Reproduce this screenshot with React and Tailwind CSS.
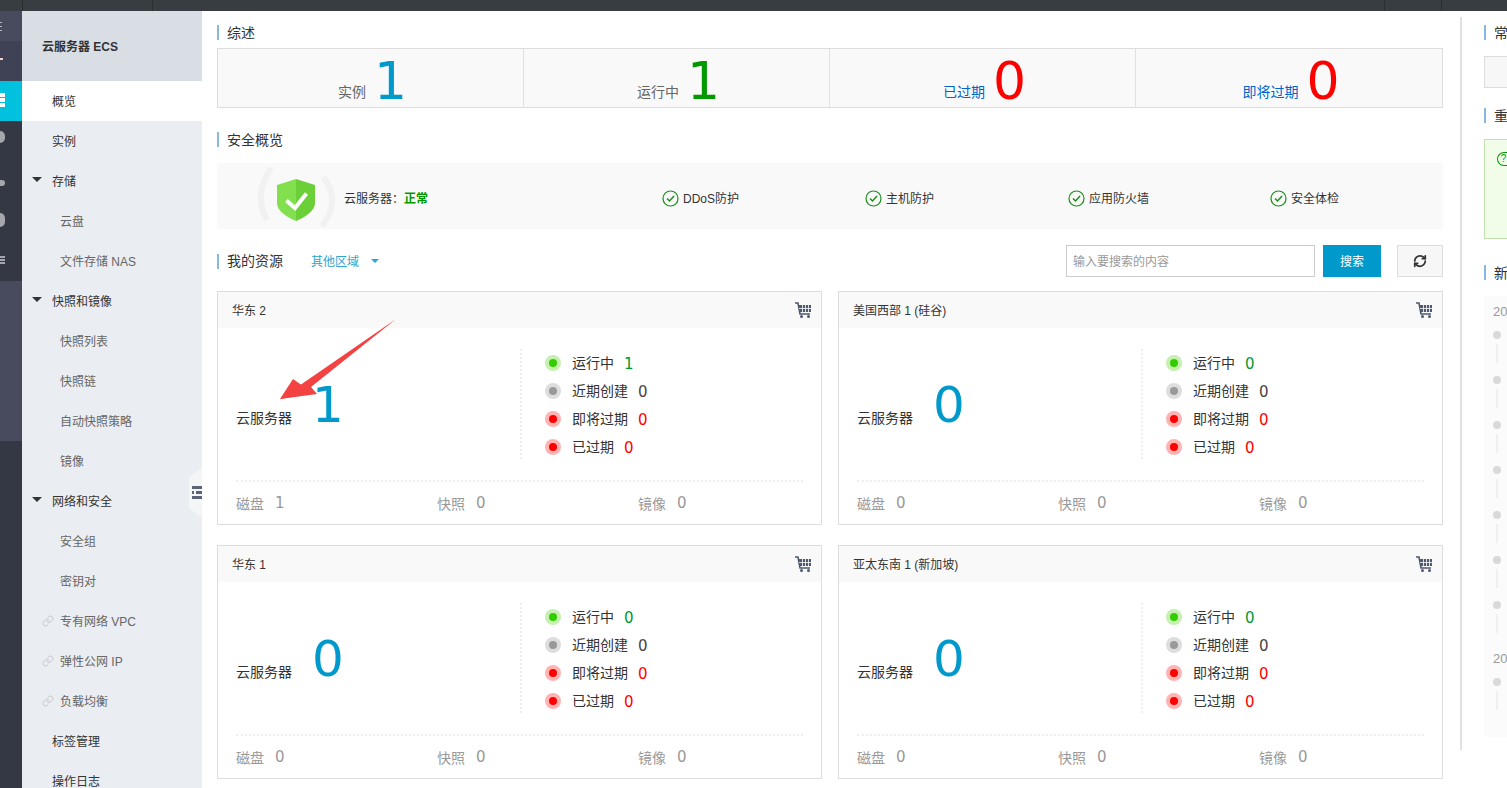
import React from 'react';
import { RefreshCw, Link as LinkIcon } from 'lucide-react';

const navItems = [
    { label: '概览', indent: 'pl-[30px]', active: true, dark: true },
    { label: '实例', indent: 'pl-[30px]', dark: true },
    { label: '存储', indent: 'pl-[30px]', group: true, dark: true },
    { label: '云盘', indent: 'pl-[38px]' },
    { label: '文件存储 NAS', indent: 'pl-[38px]' },
    { label: '快照和镜像', indent: 'pl-[30px]', group: true, dark: true },
    { label: '快照列表', indent: 'pl-[38px]' },
    { label: '快照链', indent: 'pl-[38px]' },
    { label: '自动快照策略', indent: 'pl-[38px]' },
    { label: '镜像', indent: 'pl-[38px]' },
    { label: '网络和安全', indent: 'pl-[30px]', group: true, dark: true },
    { label: '安全组', indent: 'pl-[38px]' },
    { label: '密钥对', indent: 'pl-[38px]' },
    { label: '专有网络 VPC', indent: 'pl-[38px]', link: true },
    { label: '弹性公网 IP', indent: 'pl-[38px]', link: true },
    { label: '负载均衡', indent: 'pl-[38px]', link: true },
    { label: '标签管理', indent: 'pl-[30px]', dark: true },
    { label: '操作日志', indent: 'pl-[30px]', dark: true },
];

const stats = [
    { label: '实例', value: 1, labelColor: 'text-[#666]', valueColor: 'text-[#0099cc]' },
    { label: '运行中', value: 1, labelColor: 'text-[#666]', valueColor: 'text-[#009900]' },
    { label: '已过期', value: 0, labelColor: 'text-[#0066cc]', valueColor: 'text-[#ff0000]' },
    { label: '即将过期', value: 0, labelColor: 'text-[#0066cc]', valueColor: 'text-[#ff0000]' },
];

const regions = [
    { name: '华东 2', count: 1, running: 1, disk: 1 },
    { name: '美国西部 1 (硅谷)', count: 0, running: 0, disk: 0 },
    { name: '华东 1', count: 0, running: 0, disk: 0 },
    { name: '亚太东南 1 (新加坡)', count: 0, running: 0, disk: 0 },
];

const digitFont = "font-['DejaVu_Sans',sans-serif]";

const RailIcon = ({ children, className = '' }) => (
    <div className={`h-10 flex items-center justify-start overflow-hidden ${className}`}>{children}</div>
);

// the icon rail is scrolled off to the left, only the right slice of each icon shows
const Rail = () => (
    <div className="w-[22px] shrink-0 flex flex-col bg-[#333844]">
        <div className="h-[30px] bg-[#474b5d] flex items-center overflow-hidden">
            <div className="w-[2px] h-[9px] border-y border-[#b5b7c0] flex items-center"><div className="w-full h-px bg-[#b5b7c0]" /></div>
        </div>
        <RailIcon className="bg-[#3f4255]">
            <div className="w-[3px] h-[2px] bg-[#f0d0d0] mt-[-4px]" />
        </RailIcon>
        <RailIcon className="bg-[#00c1de]">
            <div className="w-[5px] flex flex-col gap-px mt-[-2px]">
                <div className="h-1 bg-white" />
                <div className="h-1 bg-white" />
                <div className="h-1 bg-white" />
            </div>
        </RailIcon>
        <RailIcon>
            <div className="w-[5px] h-[12px] rounded-r-full bg-[#a5a7ad] mt-[-8px]" />
        </RailIcon>
        <RailIcon>
            <div className="w-[5px] h-[6px] rounded-r-full bg-[#a5a7ad] mt-[4px]" />
        </RailIcon>
        <RailIcon>
            <div className="w-[5px] h-[14px] rounded-r-full bg-[#a5a7ad] mt-[-2px]" />
        </RailIcon>
        <RailIcon>
            <div className="w-[5px] flex flex-col gap-px mt-[-2px]">
                <div className="h-[2px] bg-[#a5a7ad]" />
                <div className="h-[2px] bg-[#a5a7ad]" />
                <div className="h-[2px] bg-[#a5a7ad]" />
            </div>
        </RailIcon>
        <div className="h-40 bg-[#474b5d]" />
        <div className="flex-1" />
    </div>
);

const Sidebar = () => (
    <div className="w-[180px] shrink-0 bg-[#eaedf1] relative">
        <div className="h-[70px] bg-[#d9dee4] flex items-center pl-5 pt-[2px] text-xs font-bold text-[#333]">云服务器 ECS</div>
        {navItems.map((item) => (
            <div
                key={item.label}
                className={`h-10 flex items-center relative pt-[2px] text-xs ${item.indent} ${item.active ? 'bg-white' : ''} ${item.dark ? 'text-[#333]' : 'text-[#666]'}`}
            >
                {item.group && <div className="absolute left-[10px] top-[16px] w-0 h-0 border-x-[5px] border-x-transparent border-t-[5px] border-t-[#333]" />}
                {item.link && <LinkIcon className="absolute left-[20px] top-[14px] w-[12px] h-[12px] text-[#c4c6cc]" strokeWidth={2} />}
                {item.label}
            </div>
        ))}
        <div className="absolute left-[167px] top-[457px] w-[13px] h-[50px] bg-[#f4f5f7] flex items-center justify-end [clip-path:polygon(100%_0,100%_100%,0_80%,0_18%)]">
            <div className="w-[10px] flex flex-col gap-[2px] mt-[-1px]">
                <div className="h-[3px] bg-[#5b6478]" />
                <div className="h-[3px] flex gap-[2px]">
                    <div className="w-[2px] bg-[#5b6478]" />
                    <div className="flex-1 bg-[#5b6478]" />
                </div>
                <div className="h-[3px] bg-[#5b6478]" />
            </div>
        </div>
    </div>
);

const SectionTitle = ({ children, className = '' }) => (
    <div className={`border-l-2 border-[#88b7e0] pl-2 h-[15px] flex items-center text-sm leading-none text-[#333] whitespace-nowrap ${className}`}>{children}</div>
);

const StatCell = ({ stat, last }) => (
    <div className={`h-full flex items-end justify-center gap-2 pl-1 ${last ? 'flex-1' : 'w-[306px] border-r border-[#e1e1e1]'}`}>
        <span className={`text-sm leading-none mb-[8px] ${stat.labelColor}`}>{stat.label}</span>
        <span className={`text-[52px] leading-none ${digitFont} ${stat.valueColor}`}>{stat.value}</span>
    </div>
);

const Shield = () => (
    <svg width="80" height="66" viewBox="0 0 80 66" fill="none">
        <path d="M14 5 Q-4 32 10 57" stroke="#f1f1f1" strokeWidth="6" />
        <path d="M66 14 Q85 37 65 63" stroke="#f1f1f1" strokeWidth="6" />
        <path d="M39 16 L20 22 V40 C20 48 30 54 39 58 Z" fill="#82e04f" />
        <path d="M39 16 L58 22 V40 C58 48 48 54 39 58 Z" fill="#6bd038" />
        <path d="M29.5 37.5 L38 45 L49.5 30.5" stroke="#fff" strokeWidth="4" />
    </svg>
);

const CheckItem = ({ label, className }) => (
    <div className={`flex items-center gap-1 text-xs text-[#333] absolute top-0 h-full pt-[4px] ${className}`}>
        <svg width="17" height="17" viewBox="0 0 17 17" fill="none">
            <circle cx="8.5" cy="8.5" r="7.5" stroke="#1a8f1a" strokeWidth="1.2" />
            <path d="M5 8.5 L7.5 11 L12 6" stroke="#1a8f1a" strokeWidth="1.5" />
        </svg>
        <span className="pt-[2px]">{label}</span>
    </div>
);

const Cart = () => (
    <svg className="-mt-[1px]" width="16" height="16" viewBox="0 0 16 16">
        <path d="M0 1 H3 L5 12 H15" fill="none" stroke="#4d5a70" strokeWidth="1.6" />
        <path d="M3.6 3 H16 V10 H4.6 Z" fill="#4d5a70" />
        <path d="M7.5 3 V10 M10.5 3 V10 M13.5 3 V10 M4 6.5 H16" stroke="#fff" strokeWidth="0.8" />
        <circle cx="6.5" cy="14.5" r="1.5" fill="#4d5a70" />
        <circle cx="13.5" cy="14.5" r="1.5" fill="#4d5a70" />
    </svg>
);

const StatusRow = ({ dot, halo, label, value, valueColor }) => (
    <div className="h-7 flex items-center text-sm text-[#333]">
        <div className={`w-4 h-4 rounded-full flex items-center justify-center mr-[11px] ${halo}`}>
            <div className={`w-2 h-2 rounded-full ${dot}`} />
        </div>
        <span className="mr-[10px]">{label}</span>
        <span className={`text-[15px] mt-[3px] ${digitFont} ${valueColor}`}>{value}</span>
    </div>
);

const RegionCard = ({ region, arrow }) => (
    <div className="border border-[#dddddd] bg-white relative">
        <div className="h-9 bg-[#f9f9f9] flex items-center justify-between pl-[14px] pr-[10px] pt-[1px] text-xs text-[#333]">
            <span>{region.name}</span>
            <Cart />
        </div>
        <div className="h-[154px] mx-[18px] flex border-b-2 border-dotted border-[#eeeeee]">
            <div className="w-[284px] flex items-center pt-[1px]">
                <span className="text-sm text-[#333] mt-[26px] mr-5">云服务器</span>
                <span className={`text-[50px] leading-none text-[#0099cc] ${digitFont}`}>{region.count}</span>
            </div>
            <div className="h-[110px] mt-[21px] border-l-2 border-dotted border-[#eeeeee] pl-[23px]">
                <StatusRow dot="bg-[#33cc00]" halo="bg-[#c5f0b0]" label="运行中" value={region.running} valueColor="text-[#009933]" />
                <StatusRow dot="bg-[#999999]" halo="bg-[#dddddd]" label="近期创建" value={0} valueColor="text-[#444]" />
                <StatusRow dot="bg-[#ff0000]" halo="bg-[#ffb3b3]" label="即将过期" value={0} valueColor="text-[#ff0000]" />
                <StatusRow dot="bg-[#ff0000]" halo="bg-[#ffb3b3]" label="已过期" value={0} valueColor="text-[#ff0000]" />
            </div>
        </div>
        <div className="h-[42px] pl-[18px] pt-[1px] grid grid-cols-[201px_201px_1fr] items-center text-[#999]">
            {[['磁盘', region.disk], ['快照', 0], ['镜像', 0]].map(([name, n]) => (
                <div key={name} className="flex items-center gap-[11px]">
                    <span className="text-sm">{name}</span>
                    <span className={`text-[15px] ${digitFont}`}>{n}</span>
                </div>
            ))}
        </div>
        {arrow && (
            <svg className="absolute left-[50px] top-[25px]" width="140" height="90" viewBox="0 0 140 90">
                <path d="M12 82 L128 2 L43 70 L49 77 Z" fill="#f44242" />
                <path d="M12 82 L25 62 L45 76 Z" fill="#f44242" />
            </svg>
        )}
    </div>
);

const Timeline = () => (
    <div className="mt-4 bg-[#fbfbfb] h-[441px] pl-[9px] pt-2 text-[13px] text-[#999] overflow-hidden whitespace-nowrap">
        <div className="leading-4">2016</div>
        {[0, 1, 2, 3, 4, 5, 6].map((i) => (
            <div key={i} className="h-[45px] pt-[11px]">
                <div className="w-2 h-2 rounded-full bg-[#d9d9d9]" />
                <div className="w-[2px] h-[19px] bg-[#f0f0f0] ml-[3px] mt-[5px]" />
            </div>
        ))}
        <div className="leading-4 mt-4">2015</div>
        <div className="w-2 h-2 rounded-full bg-[#d9d9d9] mt-[11px]" />
        <div className="w-[2px] h-[19px] bg-[#f0f0f0] ml-[3px] mt-[5px]" />
    </div>
);

const App = () => (
    <div className="w-[1507px] h-[788px] overflow-hidden bg-white flex flex-col font-['Liberation_Sans','Noto_Sans_CJK_SC',sans-serif]">
        <div className="h-[11px] shrink-0 bg-[#373d41] flex">
            <div className="w-[23px] border-r border-[#2a2e31]" />
            <div className="w-[130px] border-r border-[#2a2e31]" />
            <div className="flex-1" />
            <div className="w-[57px] border-l border-[#2a2e31]" />
            <div className="w-[66px] border-l border-[#2a2e31]" />
        </div>
        <div className="flex-1 flex min-h-0">
            <Rail />
            <Sidebar />
            <div className="w-[1241px] shrink-0 pl-[15px] pt-[14px]">
                <SectionTitle>综述</SectionTitle>
                <div className="mt-2 w-[1226px] h-[60px] bg-[#f9f9f9] border border-[#dddddd] flex">
                    {stats.map((s, i) => <StatCell key={s.label} stat={s} last={i === 3} />)}
                </div>
                <SectionTitle className="mt-6">安全概览</SectionTitle>
                <div className="mt-4 w-[1226px] h-[66px] bg-[#f9f9f9] relative flex items-center pl-10">
                    <Shield />
                    <span className="text-xs text-[#333] ml-[7px] pt-[6px]">云服务器：<b className="text-[#009900]">正常</b></span>
                    <CheckItem label="DDoS防护" className="left-[445px]" />
                    <CheckItem label="主机防护" className="left-[648px]" />
                    <CheckItem label="应用防火墙" className="left-[851px]" />
                    <CheckItem label="安全体检" className="left-[1053px]" />
                </div>
                <div className="mt-4 w-[1226px] h-8 flex items-center">
                    <SectionTitle>我的资源</SectionTitle>
                    <span className="ml-7 pt-[2px] text-xs text-[#2da5cc]">其他区域</span>
                    <div className="ml-3 w-0 h-0 border-x-[4px] border-x-transparent border-t-[4px] border-t-[#2da5cc]" />
                    <div className="ml-auto w-[249px] h-8 border border-[#cccccc] flex items-center pl-[6px] pt-[2px] text-xs text-[#999]">输入要搜索的内容</div>
                    <div className="ml-2 w-[58px] h-8 bg-[#0099cc] text-white text-xs pt-[2px] flex items-center justify-center">搜索</div>
                    <div className="ml-4 w-[46px] h-8 bg-[#f7f7f7] border border-[#dddddd] flex items-center justify-center">
                        <RefreshCw className="w-[14px] h-[14px] text-[#333]" strokeWidth={3} />
                    </div>
                </div>
                <div className="mt-[14px] w-[1226px] grid grid-cols-[605px_605px] gap-x-4 gap-y-5">
                    {regions.map((r, i) => <RegionCard key={r.name} region={r} arrow={i === 0} />)}
                </div>
            </div>
            <div className="w-[2px] h-[733px] mt-[6px] ml-[17px] bg-[#e1e1e1] shrink-0" />
            <div className="w-[23px] shrink-0 ml-[22px] pt-[14px]">
                <SectionTitle>常</SectionTitle>
                <div className="mt-4 h-8 bg-[#f7f7f7] border-y border-l border-[#dddddd]" />
                <SectionTitle className="mt-5">重</SectionTitle>
                <div className="mt-4 h-[100px] bg-[#f1fde9] border-y border-l border-[#c0e0b0] pl-3 pt-3">
                    <div className="w-[12px] h-[14px] border-y border-l rounded-l-full border-[#009900] text-[#009900] text-[10px] leading-[12px] text-center">?</div>
                </div>
                <SectionTitle className="mt-[26px]">新</SectionTitle>
                <Timeline />
            </div>
        </div>
    </div>
);

export default App;
